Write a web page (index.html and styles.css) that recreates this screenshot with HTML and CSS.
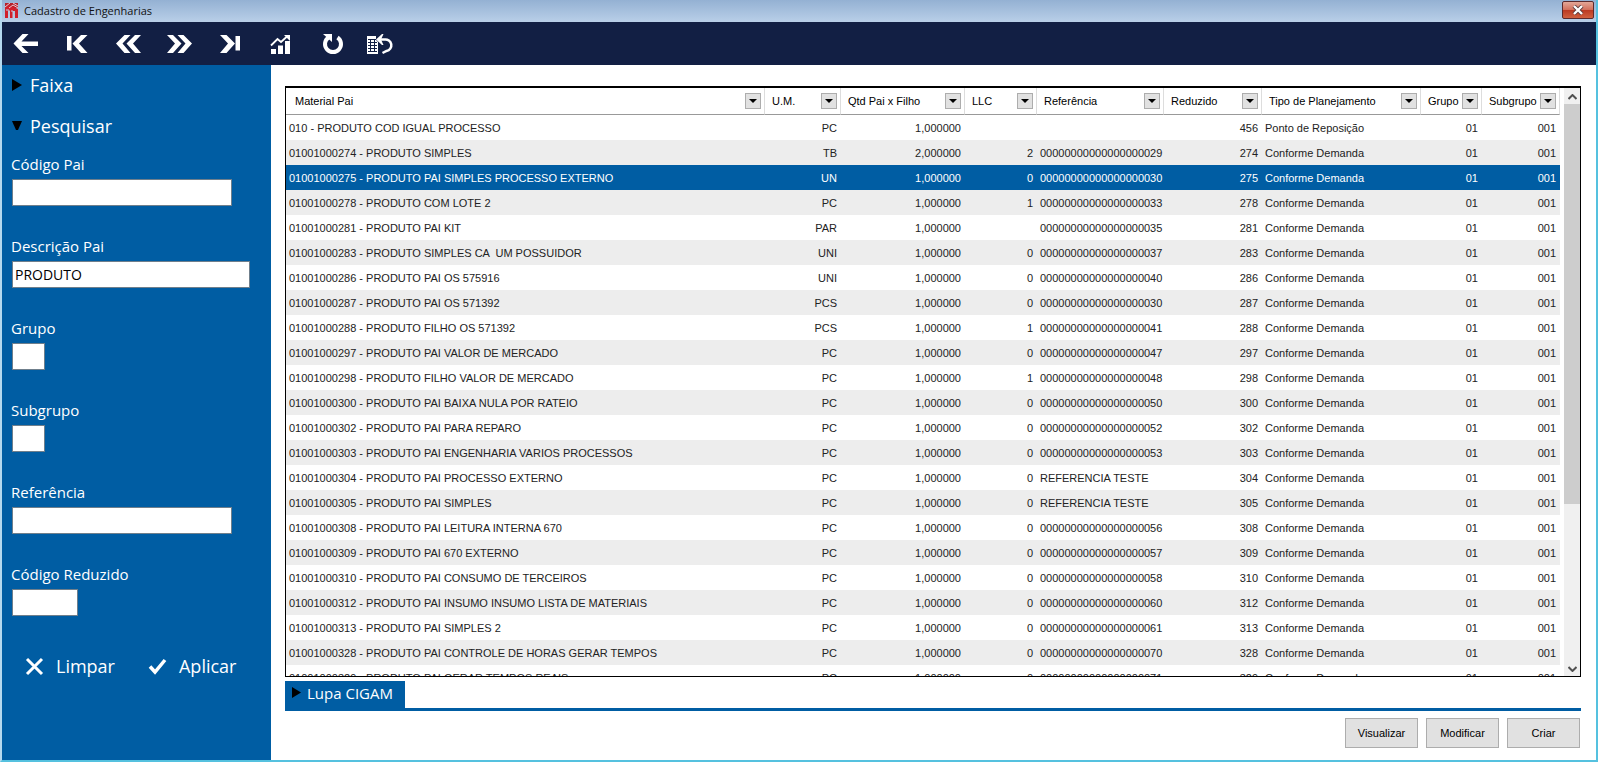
FILE: index.html
```
<!DOCTYPE html>
<html lang="pt-BR">
<head>
  <meta charset="UTF-8">
  <meta name="viewport" content="width=device-width, initial-scale=1.0">
  <title>Cadastro de Engenharias</title>
  <link rel="stylesheet" href="styles.css">
</head>
<body>

  <header class="titlebar">
    <svg class="logo" width="14" height="16" viewBox="0 0 14 16">
      <path d="M0 1h13v5H0z" fill="#b5222b"/>
      <path d="M0 6l4-3 9 4v9h-3V9H8v7H5V9H3v7H0z" fill="#d0202c"/>
      <path d="M0 5l5-4M4 6l4-3 5 3M8 1l5 3" stroke="#e9c5cf" fill="none"/>
      <path d="M1 8h3v8M6 9h2v7" stroke="#c3cbe0" fill="none"/>
    </svg>
    <h1>Cadastro de Engenharias</h1>
    <button type="button" class="close" aria-label="Fechar">
      <svg width="12" height="10" viewBox="0 0 12 10">
        <path d="M2 1l8 8M10 1L2 9" stroke="#5b3a3c" stroke-width="4"/>
        <path d="M2 1l8 8M10 1L2 9" stroke="#fff" stroke-width="2.4"/>
      </svg>
    </button>
  </header>

  <nav class="toolbar">
    <button type="button" aria-label="Voltar">
      <svg viewBox="0 0 51 43"><path d="M20.500 12h6l-7 7.500h16.500v4.500H19.500l7 7h-6L11.500 21.500z"/></svg>
    </button>
    <button type="button" aria-label="Primeiro">
      <svg viewBox="0 0 51 43"><path d="M14 14h4.500v14.500H14zM28 13h6.500l-8.500 8.500 8.500 9.500H28l-8.500-9.500z"/></svg>
    </button>
    <button type="button" aria-label="Anterior">
      <svg viewBox="0 0 51 43"><path d="M20.500 13h6l-8 8.500 8 9.500h-6l-8.500-9.500zM31 13h6l-8 8.500 8 9.500h-6l-8.500-9.500z"/></svg>
    </button>
    <button type="button" aria-label="Próximo">
      <svg viewBox="0 0 51 43"><path d="M12 13h6l8.500 8.500L18 31h-6l8-9.500zM22.500 13h6l8.500 8.500-8.500 9.500h-6l8-9.500z"/></svg>
    </button>
    <button type="button" aria-label="Último">
      <svg viewBox="0 0 51 43"><path d="M29.500 14H34v14.500h-4.500zM14 13h6.500l8.500 8.500-8.500 9.500H14l8-9.500z"/></svg>
    </button>
    <button type="button" aria-label="Gráfico">
      <svg viewBox="0 0 51 43">
        <path d="M14 27h5v5h-5zM21 23.500h5V32h-5zM28 19h5v13h-5z"/>
        <path d="M14 23.500l6.500-6.500 3.500 3 6-5.500" fill="none" stroke="#fff" stroke-width="1.800"/>
        <path d="M27 13h6v6z"/>
      </svg>
    </button>
    <button type="button" aria-label="Atualizar">
      <svg viewBox="0 0 51 43">
        <path d="M29.500 15.500a8 8 0 1 1-9 0" fill="none" stroke="#fff" stroke-width="4"/>
        <path d="M15 12h9v8z"/>
      </svg>
    </button>
    <button type="button" aria-label="Desfazer">
      <svg viewBox="0 0 51 43">
        <path d="M8 14h9v4l2 2v12H8z"/>
        <path d="M9 17.500h8M9 20.500h9M9 23.500h9M9 26.500h9M9 29.500h9M11.500 17v13M15.500 17v13" stroke="#121f44" fill="none"/>
        <path d="M21 17.500h4.500a5.500 5.500 0 0 1 2 11.500l-4 2" fill="none" stroke="#fff" stroke-width="2.500"/>
        <path d="M17 17.500l6-5.500h1.500L22 17.500l2.500 5.500H23z"/>
      </svg>
    </button>
  </nav>

  <div class="workspace">
    <aside class="sidebar">
      <button type="button" class="section"><svg width="10" height="12" viewBox="0 0 10 12"><path d="M0 0l10 6-10 6z"/></svg>Faixa</button>
      <button type="button" class="section"><svg width="10" height="10" viewBox="0 0 10 10"><path d="M0 0h10L6 9H4z"/></svg>Pesquisar</button>

      <form class="filters">
        <div class="field">
          <label for="codigoPai">Código Pai</label>
          <input type="text" id="codigoPai" class="long">
        </div>
        <div class="field">
          <label for="descricaoPai">Descrição Pai</label>
          <input type="text" id="descricaoPai" class="longer" value="PRODUTO">
        </div>
        <div class="field">
          <label for="grupo">Grupo</label>
          <input type="text" id="grupo" class="tiny">
        </div>
        <div class="field">
          <label for="subgrupo">Subgrupo</label>
          <input type="text" id="subgrupo" class="tiny">
        </div>
        <div class="field">
          <label for="referencia">Referência</label>
          <input type="text" id="referencia" class="long">
        </div>
        <div class="field">
          <label for="codigoReduzido">Código Reduzido</label>
          <input type="text" id="codigoReduzido" class="short">
        </div>
        <div class="filter-actions">
          <button type="reset">
            <svg width="19" height="19" viewBox="0 0 19 19"><path d="M2 2l15 15M17 2L2 17" fill="none" stroke="#fff" stroke-width="3"/></svg>Limpar
          </button>
          <button type="button">
            <svg width="19" height="19" viewBox="0 0 19 19"><path d="M2 9.500l5 5.500L17 3" fill="none" stroke="#fff" stroke-width="3.500"/></svg>Aplicar
          </button>
        </div>
      </form>
    </aside>

    <main class="content">
      <div class="grid">
        <div class="grid-view">
          <table>
            <colgroup>
              <col>
              <col class="w-um">
              <col class="w-qtd">
              <col class="w-llc">
              <col class="w-ref">
              <col class="w-red">
              <col class="w-tipo">
              <col class="w-grupo">
              <col class="w-sub">
            </colgroup>
            <thead>
              <tr id="columns"></tr>
            </thead>
            <tbody id="rows"></tbody>
          </table>
        </div>
        <div class="scrollbar">
          <button type="button" aria-label="Rolar para cima"><svg width="9" height="6" viewBox="0 0 9 6"><path d="M0.500 5l4-4 4 4"/></svg></button>
          <div class="track"><div class="thumb"></div></div>
          <button type="button" aria-label="Rolar para baixo"><svg width="9" height="6" viewBox="0 0 9 6"><path d="M0.500 1l4 4 4-4"/></svg></button>
        </div>
      </div>

      <div class="tabs">
        <button type="button"><svg width="9" height="11" viewBox="0 0 9 11"><path d="M0 0l9 5.500L0 11z"/></svg>Lupa CIGAM</button>
      </div>

      <footer class="actions">
        <button type="button">Visualizar</button>
        <button type="button">Modificar</button>
        <button type="button">Criar</button>
      </footer>
    </main>
  </div>

  <script>
    const columns = ['Material Pai', 'U.M.', 'Qtd Pai x Filho', 'LLC', 'Referência', 'Reduzido', 'Tipo de Planejamento', 'Grupo', 'Subgrupo'];
    const leftColumns = [0, 4, 6];
    const selectedRow = 2;

    // material, unit, quantity, LLC, reference, short code
    const products = [
      ['010 - PRODUTO COD IGUAL PROCESSO', 'PC', '1,000000', '', '', '456'],
      ['01001000274 - PRODUTO SIMPLES', 'TB', '2,000000', '2', '00000000000000000029', '274'],
      ['01001000275 - PRODUTO PAI SIMPLES PROCESSO EXTERNO', 'UN', '1,000000', '0', '00000000000000000030', '275'],
      ['01001000278 - PRODUTO COM LOTE 2', 'PC', '1,000000', '1', '00000000000000000033', '278'],
      ['01001000281 - PRODUTO PAI KIT', 'PAR', '1,000000', '', '00000000000000000035', '281'],
      ['01001000283 - PRODUTO SIMPLES CA  UM POSSUIDOR', 'UNI', '1,000000', '0', '00000000000000000037', '283'],
      ['01001000286 - PRODUTO PAI OS 575916', 'UNI', '1,000000', '0', '00000000000000000040', '286'],
      ['01001000287 - PRODUTO PAI OS 571392', 'PCS', '1,000000', '0', '00000000000000000030', '287'],
      ['01001000288 - PRODUTO FILHO OS 571392', 'PCS', '1,000000', '1', '00000000000000000041', '288'],
      ['01001000297 - PRODUTO PAI VALOR DE MERCADO', 'PC', '1,000000', '0', '00000000000000000047', '297'],
      ['01001000298 - PRODUTO FILHO VALOR DE MERCADO', 'PC', '1,000000', '1', '00000000000000000048', '298'],
      ['01001000300 - PRODUTO PAI BAIXA NULA POR RATEIO', 'PC', '1,000000', '0', '00000000000000000050', '300'],
      ['01001000302 - PRODUTO PAI PARA REPARO', 'PC', '1,000000', '0', '00000000000000000052', '302'],
      ['01001000303 - PRODUTO PAI ENGENHARIA VARIOS PROCESSOS', 'PC', '1,000000', '0', '00000000000000000053', '303'],
      ['01001000304 - PRODUTO PAI PROCESSO EXTERNO', 'PC', '1,000000', '0', 'REFERENCIA TESTE', '304'],
      ['01001000305 - PRODUTO PAI SIMPLES', 'PC', '1,000000', '0', 'REFERENCIA TESTE', '305'],
      ['01001000308 - PRODUTO PAI LEITURA INTERNA 670', 'PC', '1,000000', '0', '00000000000000000056', '308'],
      ['01001000309 - PRODUTO PAI 670 EXTERNO', 'PC', '1,000000', '0', '00000000000000000057', '309'],
      ['01001000310 - PRODUTO PAI CONSUMO DE TERCEIROS', 'PC', '1,000000', '0', '00000000000000000058', '310'],
      ['01001000312 - PRODUTO PAI INSUMO INSUMO LISTA DE MATERIAIS', 'PC', '1,000000', '0', '00000000000000000060', '312'],
      ['01001000313 - PRODUTO PAI SIMPLES 2', 'PC', '1,000000', '0', '00000000000000000061', '313'],
      ['01001000328 - PRODUTO PAI CONTROLE DE HORAS GERAR TEMPOS', 'PC', '1,000000', '0', '00000000000000000070', '328'],
      ['01001000329 - PRODUTO PAI GERAR TEMPOS REAIS', 'PC', '1,000000', '0', '00000000000000000071', '329']
    ];

    document.getElementById('columns').innerHTML = columns.map(name => `
      <th scope="col"><div class="head"><span>${name}</span><button type="button" aria-label="Filtrar ${name}"><svg width="8" height="4" viewBox="0 0 8 4"><path d="M0 0h8L4 4z"/></svg></button></div></th>`).join('');

    document.getElementById('rows').innerHTML = products.map((product, i) => {
      const plan = i === 0 ? 'Ponto de Reposição' : 'Conforme Demanda';
      const cells = product.concat(plan, '01', '001');
      const tds = cells.map((text, c) => `<td${leftColumns.includes(c) ? '' : ' class="right"'}>${text}</td>`).join('');
      return `<tr${i === selectedRow ? ' class="selected"' : ''}>${tds}</tr>`;
    }).join('');
  </script>

</body>
</html>
```
FILE: styles.css
```
* {
  box-sizing: border-box;
}

body {
  font-family: "Liberation Sans", Arial, sans-serif;
  font-size: 11px;
  margin: 0;
  height: 100vh;
  display: flex;
  flex-direction: column;
  background-color: #fff;
  border: 2px solid #55c1df;
  border-top: none;
  border-left-color: #b5d9ef;
}

button {
  font-family: inherit;
  font-size: inherit;
  margin: 0;
  padding: 0;
  border: none;
  background: none;
  cursor: pointer;
}

/* Title bar */
.titlebar {
  display: flex;
  align-items: center;
  gap: 5px;
  height: 22px;
  padding: 0 2px 2px 3px;
  background: linear-gradient(#94b1d3, #b9cfe8);
}

.titlebar h1 {
  flex: 1;
  margin: 0;
  font-family: "Open Sans", sans-serif;
  font-size: 11px;
  font-weight: normal;
  color: #111;
}

.close {
  display: flex;
  align-items: center;
  justify-content: center;
  width: 32px;
  height: 18px;
  border: 1px solid #5c2a2c;
  border-radius: 2px;
  background: linear-gradient(#e3a798, #d3705c 48%, #bb3a22 52%, #d0603f);
}

/* Toolbar */
.toolbar {
  display: flex;
  height: 43px;
  background-color: #121f44;
}

.toolbar button {
  width: 51px;
  height: 43px;
}

.toolbar svg {
  display: block;
  fill: #fff;
}

.workspace {
  flex: 1;
  min-height: 0;
  display: flex;
}

/* Sidebar */
.sidebar {
  flex: none;
  width: 269px;
  padding: 0 9px;
  background-color: #005da3;
  color: #fff;
  font-family: "Open Sans", sans-serif;
}

.section {
  display: flex;
  align-items: center;
  gap: 8px;
  height: 41px;
  padding: 0 0 2px 1px;
  color: #fff;
  font-size: 18px;
}

.filters {
  padding-top: 6px;
}

.field {
  height: 82px;
}

.field label {
  display: block;
  height: 26px;
  font-size: 15px;
  line-height: 22px;
}

.field input {
  display: block;
  height: 27px;
  margin-left: 1px;
  padding: 0 2px 1px;
  border: 1px solid #6f7f8c;
  background-color: #fff;
  color: #000;
  font-family: inherit;
  font-size: 14px;
}

.long {
  width: 220px;
}

.longer {
  width: 238px;
}

.short {
  width: 66px;
}

.tiny {
  width: 33px;
}

.filter-actions {
  display: flex;
  gap: 33px;
  padding: 9px 14px;
}

.filter-actions button {
  display: flex;
  align-items: center;
  gap: 12px;
  color: #fff;
  font-size: 18px;
}

/* Content */
.content {
  flex: 1;
  min-width: 0;
  display: flex;
  flex-direction: column;
  padding: 21px 15px 12px 14px;
}

.grid {
  flex: 1;
  min-height: 0;
  display: flex;
  gap: 4px;
  border: 1px solid #000;
  border-top-width: 2px;
}

.grid-view {
  flex: 1;
  min-width: 0;
  overflow: hidden;
}

table {
  width: 100%;
  table-layout: fixed;
  border-collapse: separate;
  border-spacing: 0;
}

.w-um {
  width: 76px;
}

.w-qtd {
  width: 124px;
}

.w-llc {
  width: 72px;
}

.w-ref {
  width: 127px;
}

.w-red {
  width: 98px;
}

.w-tipo {
  width: 159px;
}

.w-grupo {
  width: 61px;
}

.w-sub {
  width: 78px;
}

th {
  height: 27px;
  padding: 0;
  border-right: 1px solid #ddd;
  border-bottom: 1px solid #999;
  font-weight: normal;
  color: #000;
}

.head {
  display: flex;
  align-items: center;
  justify-content: space-between;
  padding: 0 3px 0 7px;
  white-space: nowrap;
}

th:first-child .head {
  padding-left: 9px;
}

.head button {
  display: flex;
  align-items: center;
  justify-content: center;
  width: 16px;
  height: 16px;
  border: 1px solid #adadad;
  background-color: #e1e1e1;
}

td {
  height: 25px;
  padding: 0 4px 0 3px;
  overflow: hidden;
  white-space: pre;
  color: #222;
}

td.right {
  text-align: right;
}

tbody tr:nth-child(even) {
  background-color: #ededed;
}

tbody tr.selected {
  background-color: #005da3;
}

.selected td {
  color: #fff;
}

.scrollbar {
  display: flex;
  flex-direction: column;
  width: 16px;
  background-color: #f0f0f0;
}

.scrollbar button {
  height: 16px;
}

.scrollbar path {
  fill: none;
  stroke: #505050;
  stroke-width: 2;
}

.track {
  flex: 1;
}

.thumb {
  height: 72%;
  background-color: #cdcdcd;
}

.tabs {
  display: flex;
  margin-top: 4px;
  border-bottom: 3px solid #005da3;
}

.tabs button {
  display: flex;
  align-items: center;
  gap: 6px;
  height: 27px;
  padding: 0 12px 4px 7px;
  background-color: #005da3;
  color: #fff;
  font-family: "Open Sans", sans-serif;
  font-size: 15px;
}

.actions {
  display: flex;
  justify-content: flex-end;
  gap: 8px;
  padding: 7px 1px 0;
}

.actions button {
  width: 73px;
  height: 30px;
  border: 1px solid #adadad;
  background-color: #e1e1e1;
  color: #000;
}
```
